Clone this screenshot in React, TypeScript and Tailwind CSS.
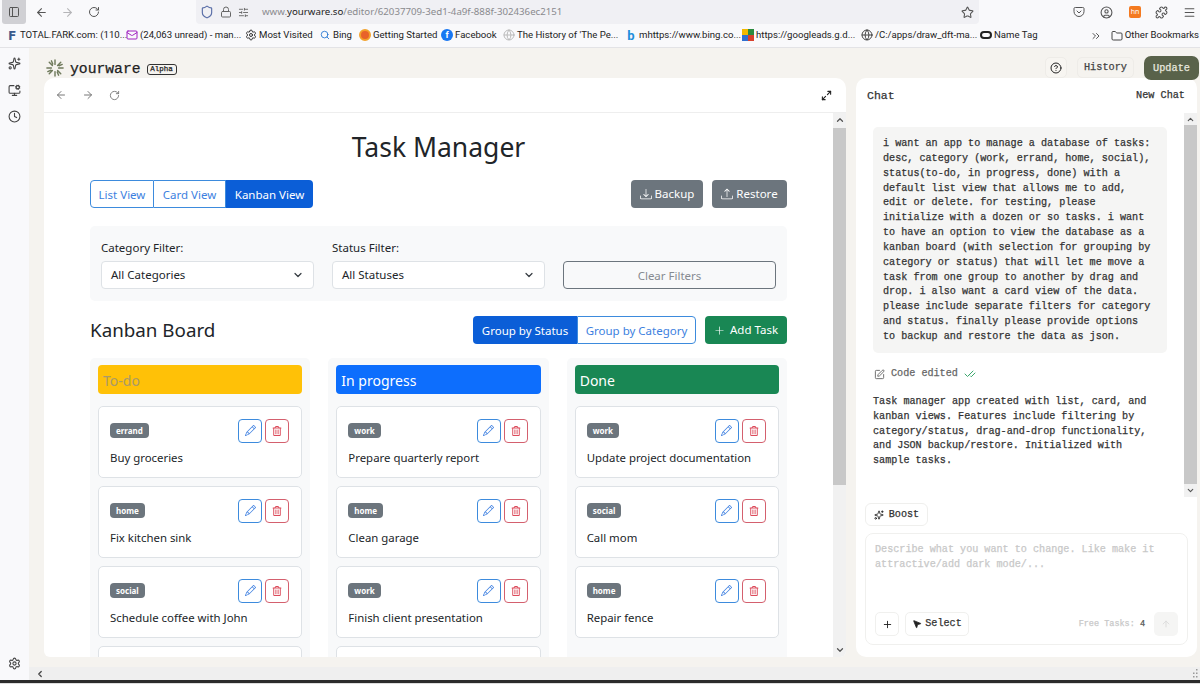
import React from 'react';
import { ArrowLeft, ArrowRight, RotateCw, Shield, Lock, SlidersHorizontal, Star, Menu, Puzzle, CircleUser, Globe, Folder, ChevronsRight, ChevronDown, Search, Mail, Settings, Sparkles, Clock, MonitorCog, Maximize2, CircleHelp, SquarePen, CheckCheck, Plus, MousePointer2, ArrowUp, ChevronUp, ChevronLeft, PanelLeft, Pocket } from 'lucide-react';
import { BsPencil, BsDownload, BsUpload, BsPlusLg } from 'react-icons/bs';
import { FaRegTrashAlt } from 'react-icons/fa';

const sans = 'font-["Noto_Sans",sans-serif]';
const mono = 'font-["Liberation_Mono",monospace] [-webkit-text-stroke:0.25px]';

const bookmarks = [
  { icon: <span className="text-[13px] font-black text-[#3a5a8c] leading-none">F</span>, label: 'TOTAL.FARK.com: (110...', w: 'w-[120px]' },
  { icon: <Mail size={12} className="text-[#a020c0]" />, label: '(24,063 unread) - man...', w: 'w-[119px]' },
  { icon: <Settings size={12} className="text-[#333]" />, label: 'Most Visited', w: 'w-[74px]' },
  { icon: <Search size={10} className="text-[#1a6fd0]" />, label: 'Bing', w: 'w-[40px]' },
  { icon: <span className="w-3 h-3 rounded-full bg-[#e8632a] border-2 border-[#f2a12b]" />, label: 'Getting Started', w: 'w-[82px]' },
  { icon: <span className="w-3 h-3 rounded-full bg-[#1877f2] text-white text-[9px] font-bold leading-3 text-center">f</span>, label: 'Facebook', w: 'w-[62px]' },
  { icon: <Globe size={12} className="text-[#bbb]" />, label: "The History of 'The Pe...", w: 'w-[122px]' },
  { icon: <span className="text-[13px] font-bold text-[#1f8fdc] leading-none">b</span>, label: 'mhttps://www.bing.co...', w: 'w-[117px]' },
  {
    icon: (
      <span className="grid grid-cols-2 w-3 h-3">
        <span className="bg-[#f2b800]" /><span className="bg-[#2a8a3e]" /><span className="bg-[#2f6fd0]" /><span className="bg-[#d8402c]" />
      </span>
    ),
    label: 'https://googleads.g.d...', w: 'w-[119px]',
  },
  { icon: <Globe size={12} className="text-[#444]" />, label: '/C:/apps/draw_dft-ma...', w: 'w-[119px]' },
  { icon: <span className="w-3 h-2 rounded-[4px] border-2 border-[#222]" />, label: 'Name Tag', w: 'w-[60px]' },
];

const columns = [
  {
    title: 'To-do', head: 'bg-[#ffc107]', text: 'text-[#a89a6a]',
    tasks: [['errand', 'Buy groceries'], ['home', 'Fix kitchen sink'], ['social', 'Schedule coffee with John']],
    more: true,
  },
  {
    title: 'In progress', head: 'bg-[#0d6efd]', text: 'text-white',
    tasks: [['work', 'Prepare quarterly report'], ['home', 'Clean garage'], ['work', 'Finish client presentation']],
    more: true,
  },
  {
    title: 'Done', head: 'bg-[#198754]', text: 'text-white',
    tasks: [['work', 'Update project documentation'], ['social', 'Call mom'], ['home', 'Repair fence']],
    more: false,
  },
];

const prompt = [
  'i want an app to manage a database of tasks:',
  'desc, category (work, errand, home, social),',
  'status(to-do, in progress, done) with a',
  'default list view that allows me to add,',
  'edit or delete. for testing, please',
  'initialize with a dozen or so tasks. i want',
  'to have an option to view the database as a',
  'kanban board (with selection for grouping by',
  'category or status) that will let me move a',
  'task from one group to another by drag and',
  'drop. i also want a card view of the data.',
  'please include separate filters for category',
  'and status. finally please provide options',
  'to backup and restore the data as json.',
];

const reply = [
  'Task manager app created with list, card, and',
  'kanban views. Features include filtering by',
  'category/status, drag-and-drop functionality,',
  'and JSON backup/restore. Initialized with',
  'sample tasks.',
];

function Spark() {
  return (
    <svg width="18" height="18" viewBox="0 0 20 20" stroke="#6f7a5c" strokeWidth="1.6" strokeLinecap="round">
      <path d="M10 1v5M10 14v5M1 10h5M14 10h5M3.6 3.6l3.5 3.5M12.9 12.9l3.5 3.5M3.6 16.4l3.5-3.5M12.9 7.1l3.5-3.5M6 2l1.5 3.5M14 18l-1.5-3.5M2 14l3.5-1.5M18 6l-3.5 1.5" />
    </svg>
  );
}

function TaskCard({ tag, title }: { tag: string; title: string }) {
  return (
    <div className="h-[72.5px] shrink-0 bg-white border border-[#dee2e6] rounded-[5px] pl-[11px] pr-[12px] pt-3">
      <div className="flex justify-between items-start">
        <span className="mt-[4px] h-[15px] px-[6px] rounded-[4px] bg-[#6c757d] text-white text-[8px] font-bold leading-[15px]">{tag}</span>
        <div className="flex gap-[3px]">
          <span className="w-6 h-6 flex items-center justify-center border border-[#3d8bdd] rounded-[4px] text-[#3d7fe0]"><BsPencil size={11} /></span>
          <span className="w-6 h-6 flex items-center justify-center border border-[#d4606e] rounded-[4px] text-[#dc4a5a]"><FaRegTrashAlt size={10} /></span>
        </div>
      </div>
      <div className="mt-[6px] text-[11.4px] leading-[18px] text-[#212529]">{title}</div>
    </div>
  );
}

export default function App() {
  return (
    <div className={`w-[1200px] h-[684px] overflow-hidden flex flex-col bg-[#f9f9fb] ${sans}`}>
      {/* browser toolbar */}
      <div className="h-6 shrink-0 flex items-center text-[#555]">
        <div className="w-6 h-6 ml-[2px] bg-[#d0d0d4] rounded-b-[3px] flex items-center justify-center"><PanelLeft size={12} /></div>
        <ArrowLeft size={13} className="ml-[9px]" />
        <ArrowRight size={13} className="ml-[13px] text-[#b5b5b8]" />
        <RotateCw size={12} className="ml-[14px]" />
        <div className="ml-[96px] w-[783px] h-6 bg-[#f0f0f4] rounded-b-[4px] flex items-center pl-[4px] pr-[5px]">
          <Shield size={14} className="text-[#5b6fa8]" />
          <Lock size={12} className="ml-[6px] text-[#666]" />
          <SlidersHorizontal size={11} className="ml-[6px] text-[#666]" />
          <span className="ml-[13px] text-[9.7px] text-[#8a8a8e] whitespace-nowrap">www.<span className="text-[#222]">yourware.so</span>/editor/62037709-3ed1-4a9f-888f-302436ec2151</span>
          <Star size={13} className="ml-auto text-[#555]" />
        </div>
        <Pocket size={12} className="ml-[94px]" />
        <CircleUser size={13} className="ml-[15px]" />
        <span className="ml-[16px] w-3 h-3 bg-[#f47a20] rounded-[2px] text-white text-[7px] leading-3 text-center">hn</span>
        <Puzzle size={13} className="ml-[14px]" />
        <Menu size={13} className="ml-[15px]" />
      </div>

      {/* bookmarks */}
      <div className='h-6 shrink-0 flex items-center pl-[6px] border-b border-[#e3e3e6] font-["Roboto",sans-serif] text-[9.6px] text-[#222] whitespace-nowrap'>
        {bookmarks.map(b => (
          <div key={b.label} className={`flex items-center gap-[2px] ${b.w} shrink-0`}>
            <span className="w-[12px] h-[12px] shrink-0 flex items-center justify-center">{b.icon}</span>
            <span>{b.label}</span>
          </div>
        ))}
        <ChevronsRight size={12} className="ml-auto text-[#555]" />
        <Folder size={12} className="ml-[9px] text-[#444]" />
        <span className="ml-[2px] mr-[1px]">Other Bookmarks</span>
      </div>

      <div className="flex-1 min-h-0 flex">
        {/* side rail */}
        <div className="w-[29px] shrink-0 flex flex-col items-center pt-[9px] gap-[13.5px] pr-[1px] text-[#444]">
          <Sparkles size={13} />
          <MonitorCog size={13} />
          <Clock size={13} />
          <Settings size={13} className="mt-auto mb-[10px]" />
        </div>

        <div className="flex-1 min-w-0 flex flex-col">
          <div className="flex-1 min-h-0 bg-[#f5f3ef] flex flex-col pl-[15px] pr-[3px]">
            {/* header */}
            <div className="relative z-10 h-[30px] shrink-0 flex items-start pt-[9px] pl-[2px] -mr-[2px]">
              <span className="mt-[2px]"><Spark /></span>
              <span className={`ml-[6px] mt-[3px] text-[14.7px] leading-[18px] text-[#222] ${mono}`}>yourware</span>
              <span className={`ml-[6px] mt-[7px] h-[11px] w-[30px] text-center border border-[#333] rounded-[3px] text-[7.5px] leading-[9px] text-[#222] ${mono}`}>Alpha</span>
              <span className="ml-auto w-[22px] h-[21px] flex items-center justify-center rounded-[5px] bg-[#f7f5f1] border border-[#eeece8] text-[#222]"><CircleHelp size={12} /></span>
              <span className={`ml-[10px] h-[21px] w-[57px] rounded-[5px] border border-[#eeece8] text-center text-[10.25px] leading-[19px] text-[#444] ${mono}`}>History</span>
              <span className={`ml-[10px] -mt-[1px] h-[24px] w-[55px] rounded-[7px] bg-[#59624a] text-center text-[10.25px] leading-[24px] text-[#e8e8df] ${mono}`}>Update</span>
            </div>

            <div className="flex-1 min-h-0 flex gap-[10px]">
              {/* preview */}
              <div className="w-[802px] h-[579px] shrink-0 bg-white rounded-t-[10px] rounded-b-[6px] flex flex-col overflow-hidden">
                <div className="h-[35px] shrink-0 flex items-center pl-[11px] pr-[14px] border-b border-[#eeeeee] text-[#777]">
                  <ArrowLeft size={12} />
                  <ArrowRight size={12} className="ml-[15px]" />
                  <RotateCw size={11} className="ml-[15px]" />
                  <Maximize2 size={11} strokeWidth={2.4} className="ml-auto text-[#222]" />
                </div>
                <div className="flex-1 min-h-0 flex">
                  <div className="flex-1 min-w-0 pl-[46px] pr-[46px] overflow-hidden">
                    <h1 className="mt-[15px] text-center text-[26.5px] leading-[38px] text-[#212529]">Task Manager</h1>
                    <div className="mt-[14px] flex justify-between">
                      <div className="flex text-[11.5px] h-[28px] leading-[28px]">
                        <span className="w-[64px] text-center border border-[#3d8bdd] rounded-l-[4px] text-[#3d7fe0]">List View</span>
                        <span className="w-[72px] text-center border-y border-r border-[#3d8bdd] text-[#3d7fe0]">Card View</span>
                        <span className="w-[87px] text-center bg-[#0b5ed7] rounded-r-[4px] text-white leading-[30px]">Kanban View</span>
                      </div>
                      <div className="flex gap-[9px] text-[11.5px] text-white h-[28px]">
                        <span className="w-[72px] flex items-center justify-center gap-[3px] rounded-[4px] bg-[#6c757d]"><BsDownload size={12} />Backup</span>
                        <span className="w-[75px] flex items-center justify-center gap-[3px] rounded-[4px] bg-[#6c757d]"><BsUpload size={12} />Restore</span>
                      </div>
                    </div>

                    <div className="mt-[18px] h-[75px] bg-[#f8f9fa] rounded-[5px] px-[11px] pt-[12px] grid grid-cols-3 gap-x-[18px] text-[11.5px] text-[#212529]">
                      {['Category Filter:|All Categories', 'Status Filter:|All Statuses'].map(f => {
                        const [label, value] = f.split('|');
                        return (
                          <div key={label}>
                            <div className="h-[18px] leading-[20px] mb-[5px]">{label}</div>
                            <div className="h-[28px] bg-white border border-[#dee2e6] rounded-[4px] pl-[9px] pr-[9px] leading-[28px] flex items-center justify-between">
                              {value}<ChevronDown size={12} strokeWidth={2.4} className="text-[#343a40]" />
                            </div>
                          </div>
                        );
                      })}
                      <div className="pt-[23px]">
                        <div className="h-[28px] border border-[#6c757d] rounded-[4px] text-center leading-[28px] text-[#868b91]">Clear Filters</div>
                      </div>
                    </div>

                    <div className="mt-[15px] flex items-center">
                      <h2 className="text-[18.8px] leading-[28px] text-[#212529]">Kanban Board</h2>
                      <div className="ml-auto flex text-[11.5px] h-[28px] leading-[29px]">
                        <span className="w-[104px] text-center bg-[#0b5ed7] rounded-l-[4px] text-white">Group by Status</span>
                        <span className="w-[119px] text-center border border-[#3d8bdd] rounded-r-[4px] text-[#3d7fe0] leading-[27px]">Group by Category</span>
                      </div>
                      <span className="ml-[9px] w-[82px] h-[28px] flex items-center justify-center gap-[5px] rounded-[4px] bg-[#198754] text-white text-[11.5px]"><BsPlusLg size={11} />Add Task</span>
                    </div>

                    <div className="mt-[14px] grid grid-cols-3 gap-x-[18px]">
                      {columns.map(c => (
                        <div key={c.title} className="h-[320px] bg-[#f8f9fa] rounded-[5px] px-2 pt-[7px] flex flex-col gap-[7.5px] overflow-hidden">
                          <div className={`h-[29px] shrink-0 mb-[4px] rounded-[4px] pl-[5px] text-[14px] leading-[32px] ${c.head} ${c.text}`}>{c.title}</div>
                          {c.tasks.map(([tag, title]) => <TaskCard key={title} tag={tag} title={title} />)}
                          {c.more && <div className="h-[72px] shrink-0 bg-white border border-[#dee2e6] rounded-[5px]" />}
                        </div>
                      ))}
                    </div>
                  </div>
                  <div className="w-[13px] shrink-0 bg-[#f1f1f1] flex flex-col items-center text-[#555]">
                    <ChevronUp size={10} strokeWidth={3} className="mt-[2px] shrink-0" />
                    <div className="w-full flex-1 mt-[3px] mb-[160px] bg-[#c8c8c8]" />
                    <ChevronDown size={10} strokeWidth={3} className="mb-[2px] shrink-0" />
                  </div>
                </div>
              </div>

              {/* chat */}
              <div className={`w-[341px] h-[579px] shrink-0 bg-white rounded-[10px] flex flex-col overflow-hidden ${mono}`}>
                <div className="h-[35px] shrink-0 flex items-center justify-between pl-[11px] pr-[12px] text-[#333]">
                  <span className="text-[11.5px]">Chat</span>
                  <span className="text-[10.2px]">New Chat</span>
                </div>
                <div className="h-[384px] shrink-0 flex">
                  <div className="flex-1 min-w-0 pl-[17px] pr-[17px] pt-[14px] text-[10.15px] leading-[14.85px] text-[#333]">
                    <div className="h-[226px] bg-[#f5f5f4] rounded-[5px] px-[10px] pt-[10px] whitespace-pre">
                      {prompt.map(l => <div key={l}>{l}</div>)}
                    </div>
                    <div className="mt-[14px] ml-[1px] flex items-center gap-[6px] text-[10.15px] text-[#666]">
                      <SquarePen size={11} /><span>Code edited</span><CheckCheck size={12} className="text-[#3aa76d]" />
                    </div>
                    <div className="mt-[13px] whitespace-pre">
                      {reply.map(l => <div key={l}>{l}</div>)}
                    </div>
                  </div>
                  <div className="w-[13px] shrink-0 bg-[#f1f1f1] flex flex-col items-center text-[#555]">
                    <ChevronUp size={9} strokeWidth={3} className="mt-[2px] shrink-0" />
                    <div className="w-full flex-1 mt-[1px] bg-[#c8c8c8]" />
                    <ChevronDown size={9} strokeWidth={3} className="my-[2px] shrink-0" />
                  </div>
                </div>
                <div className="mt-[6px] ml-[9px] w-[63px] h-[23px] flex items-center justify-center gap-[5px] border border-[#efefed] rounded-[6px] text-[10.15px] text-[#333]">
                  <Sparkles size={10} className="text-[#222]" />Boost
                </div>
                <div className="mt-[7px] ml-[9px] mr-[9px] h-[112px] border border-[#f0f0ee] rounded-[8px] flex flex-col px-[9px] pt-[8px] pb-[8px]">
                  <div className="text-[10.15px] leading-[15px] text-[#c8c8c8] whitespace-pre">{'Describe what you want to change. Like make it\nattractive/add dark mode/...'}</div>
                  <div className="mt-auto flex items-center">
                    <span className="w-6 h-6 flex items-center justify-center border border-[#f0f0ee] rounded-[5px] text-[#222]"><Plus size={11} /></span>
                    <span className="ml-[6px] w-[64px] h-6 flex items-center justify-center gap-[3px] border border-[#f0f0ee] rounded-[5px] text-[10.15px] text-[#333]"><MousePointer2 size={10} fill="#222" className="text-[#222]" />Select</span>
                    <span className="ml-auto text-[8.5px] text-[#c8c8c8]">Free Tasks: <span className="text-[#555]">4</span></span>
                    <span className="ml-[9px] w-6 h-6 flex items-center justify-center rounded-[5px] bg-[#f5f5f4] text-[#d8d8d8]"><ArrowUp size={10} /></span>
                  </div>
                </div>
              </div>
            </div>
            <div className="h-[10px] shrink-0" />
          </div>

          {/* bottom scrollbar */}
          <div className="h-[13px] shrink-0 bg-[#efefef] flex items-center justify-between pl-[6px] pr-[2px] text-[#444]">
            <ChevronLeft size={10} strokeWidth={3} />
            <svg width="6" height="9" viewBox="0 0 6 9" fill="#999">
              <rect x="4" y="0" width="1.5" height="1.5" /><rect x="4" y="3.5" width="1.5" height="1.5" /><rect x="1" y="3.5" width="1.5" height="1.5" /><rect x="4" y="7" width="1.5" height="1.5" /><rect x="1" y="7" width="1.5" height="1.5" />
            </svg>
          </div>
        </div>
      </div>

      <div className="h-[3px] shrink-0 bg-[#2b2b2b]" />
      <div className="h-[1px] shrink-0 bg-[#dddddd]" />
    </div>
  );
}
